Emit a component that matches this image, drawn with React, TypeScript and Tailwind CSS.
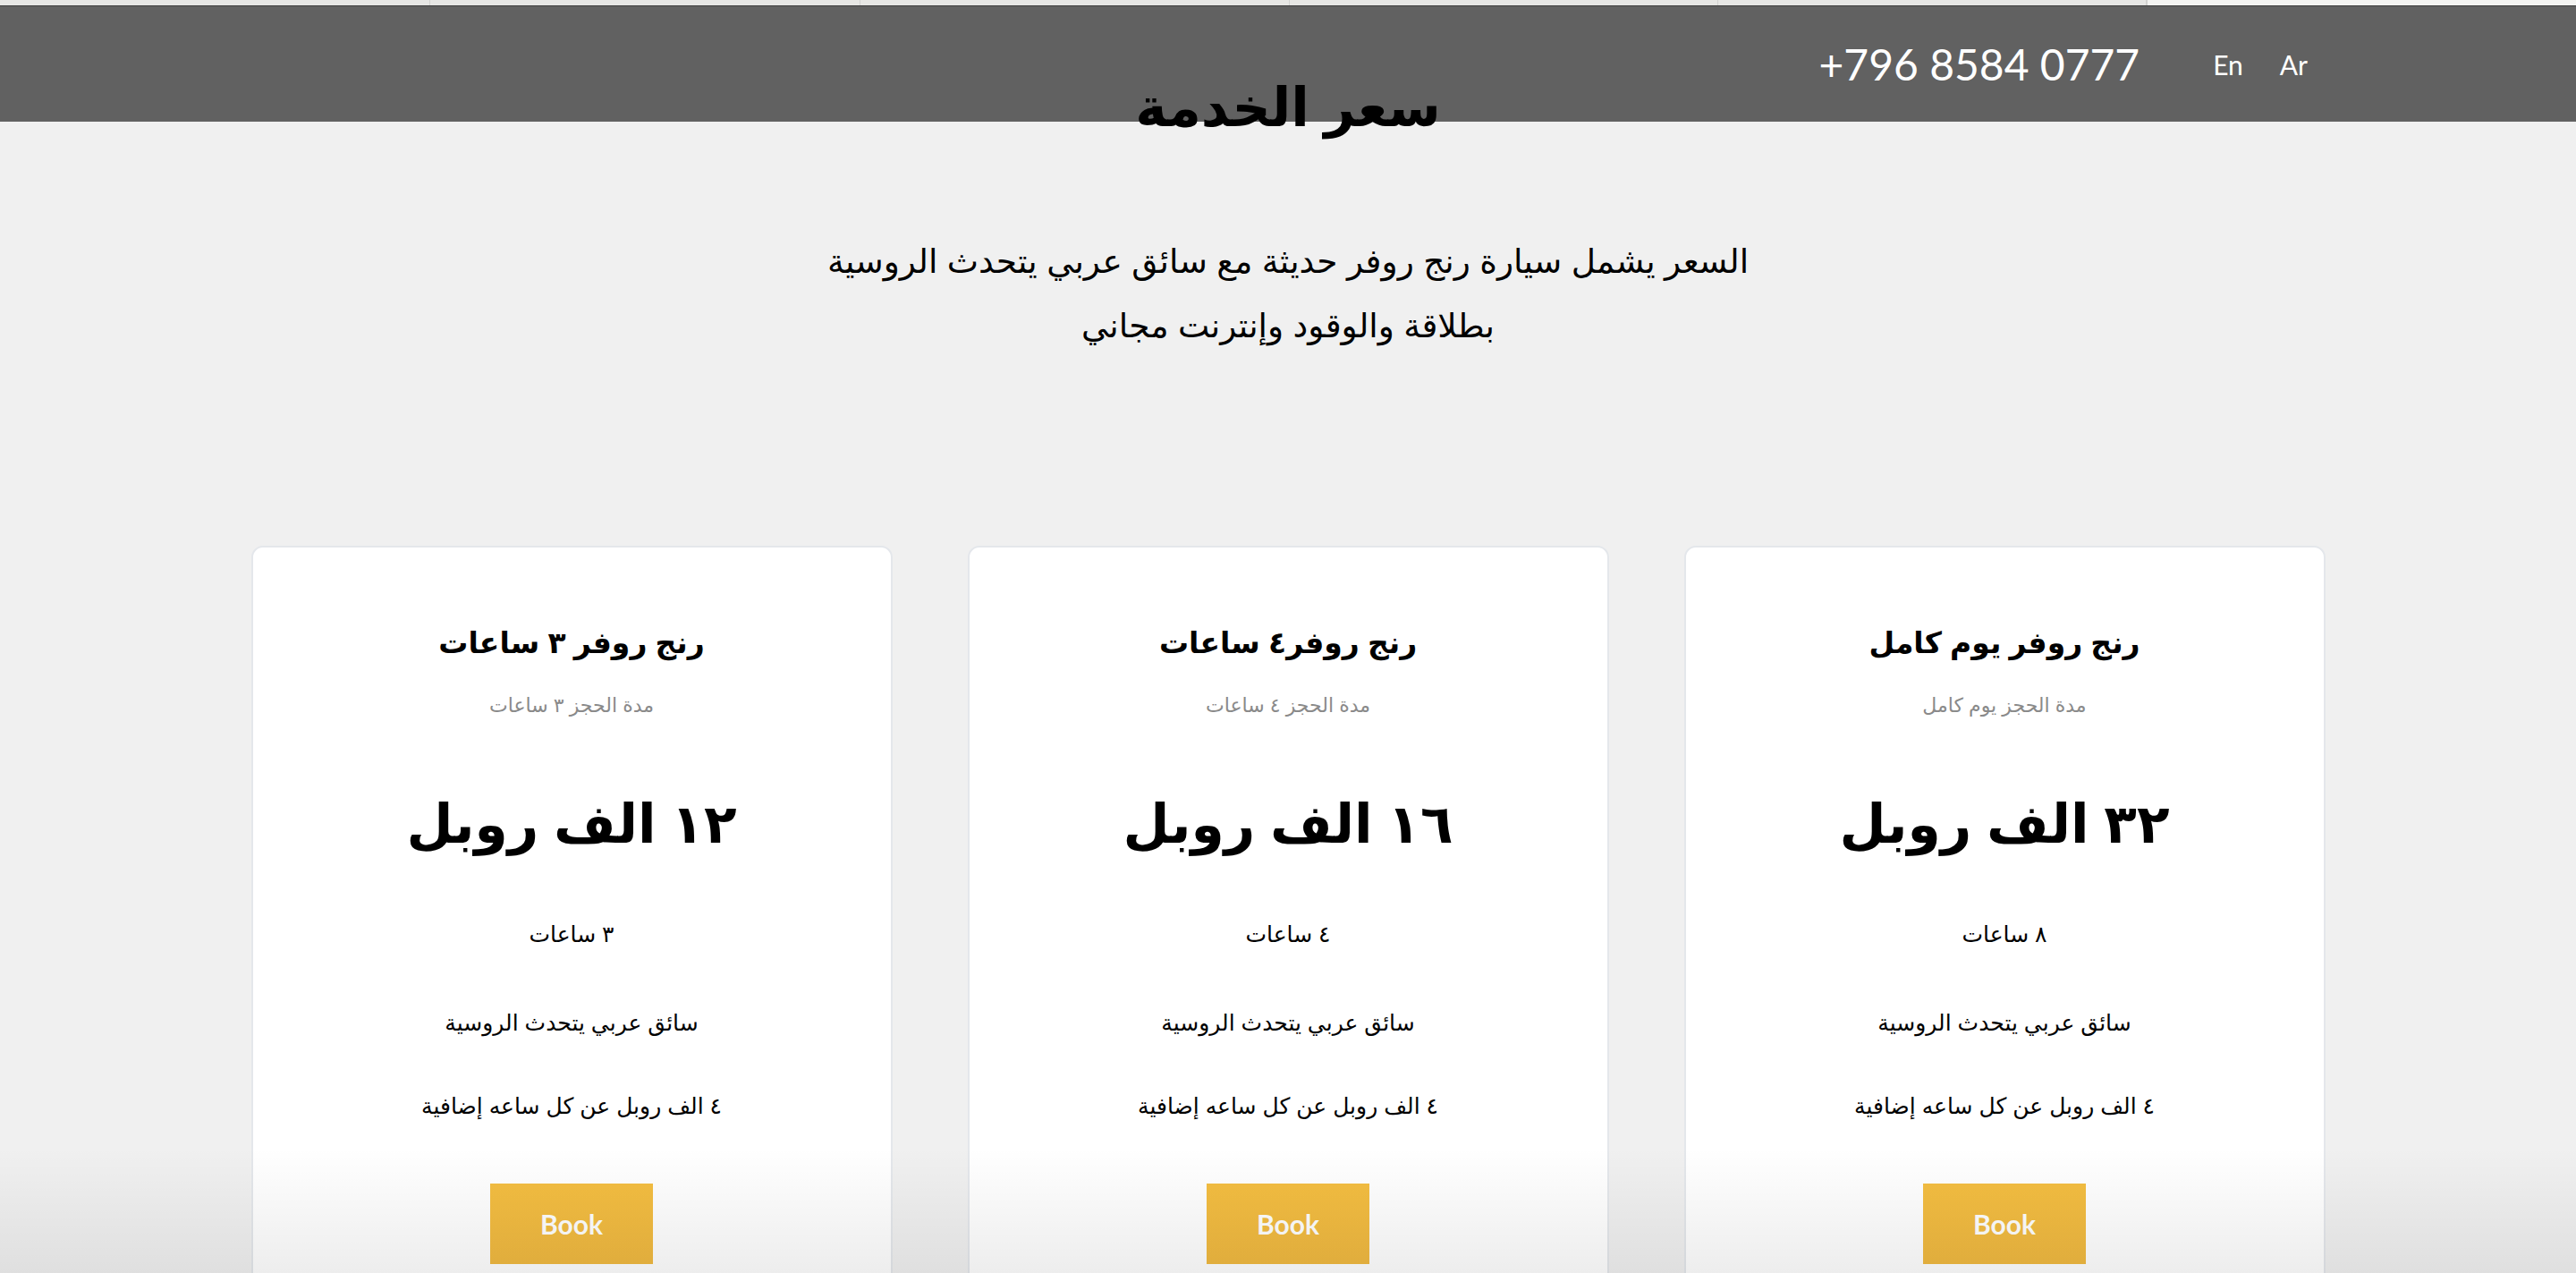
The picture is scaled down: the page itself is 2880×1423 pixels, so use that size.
import React from "react";

const plans = [
  {
    title: "رنج روفر ٣ ساعات",
    sub: "مدة الحجز ٣ ساعات",
    price: "١٢ الف روبل",
    hours: "٣ ساعات",
  },
  {
    title: "رنج روفر٤ ساعات",
    sub: "مدة الحجز ٤ ساعات",
    price: "١٦ الف روبل",
    hours: "٤ ساعات",
  },
  {
    title: "رنج روفر يوم كامل",
    sub: "مدة الحجز يوم كامل",
    price: "٣٢ الف روبل",
    hours: "٨ ساعات",
  },
];

const ar = "font-['Liberation_Sans','DejaVu_Sans',sans-serif]";

function Card({ p }: { p: (typeof plans)[number] }) {
  return (
    <div className="w-[717px] h-[900px] shrink-0 bg-white border-2 border-[#e4e7eb] rounded-[13px] flex flex-col items-center pt-[87px] text-black">
      <div className={`${ar} text-[33px] leading-[40px] font-bold`}>{p.title}</div>
      <div className={`${ar} mt-[35px] text-[22px] leading-[30px] text-[#8a8a8a]`}>{p.sub}</div>
      <div className={`${ar} mt-[78px] text-[60px] leading-[80px] font-bold`}>{p.price}</div>
      <div className={`${ar} mt-[62px] text-[25px] leading-[40px]`}>{p.hours}</div>
      <div className={`${ar} mt-[59px] text-[25px] leading-[40px]`}>سائق عربي يتحدث الروسية</div>
      <div className={`${ar} mt-[53px] text-[25px] leading-[40px]`}>٤ الف روبل عن كل ساعه إضافية</div>
      <button className="mt-[67px] w-[182px] h-[90px] bg-gradient-to-b from-[#f4be41] to-[#f0b941] text-white text-[30px] font-bold font-['Lato',sans-serif]">
        Book
      </button>
    </div>
  );
}

export default function App() {
  return (
    <div className="relative min-h-[1423px] h-[1423px] overflow-hidden bg-[#f0f0f0]">
      <div className="flex h-[6px] bg-[#e6e6e4]">
        <div className="w-[481px] border-r border-[#d2d2d0]" />
        <div className="w-[481px] border-r border-[#d2d2d0]" />
        <div className="w-[480px] border-r border-[#d2d2d0]" />
        <div className="w-[479px] border-r border-[#d2d2d0]" />
        <div className="w-[480px] border-r-2 border-[#d2d2d0]" />
        <div className="flex-1 bg-[#f3f3f1]" />
      </div>
      <div className="h-px bg-[#3d3d3d]" />
      <header className="h-[129px] bg-[#616161] flex items-center justify-end pr-[300px] text-white font-['Lato',sans-serif]">
        <span className="text-[48px] leading-none tracking-[0px]">+796 8584 0777</span>
        <span className="ml-[82px] text-[30px] leading-none">En</span>
        <span className="ml-[41px] text-[30px] leading-none">Ar</span>
      </header>

      <main dir="rtl" className="relative z-10 flex flex-col items-center">
        <h1 className={`${ar} -mt-[55px] text-[60px] leading-[80px] font-bold text-black`}>سعر الخدمة</h1>
        <p className={`${ar} mt-[95px] text-[37.5px] leading-[72px] text-black text-center`}>
          السعر يشمل سيارة رنج روفر حديثة مع سائق عربي يتحدث الروسية
          <br />
          بطلاقة والوقود وإنترنت مجاني
        </p>
        <div className="mt-[210px] flex gap-[84px]" dir="rtl">
          {[plans[2], plans[1], plans[0]].map((p, i) => (
            <Card key={i} p={p} />
          ))}
        </div>
      </main>

      <div className="pointer-events-none absolute inset-x-0 bottom-0 z-20 h-[140px] bg-gradient-to-b from-transparent to-[rgba(0,0,0,0.07)]" />
    </div>
  );
}
